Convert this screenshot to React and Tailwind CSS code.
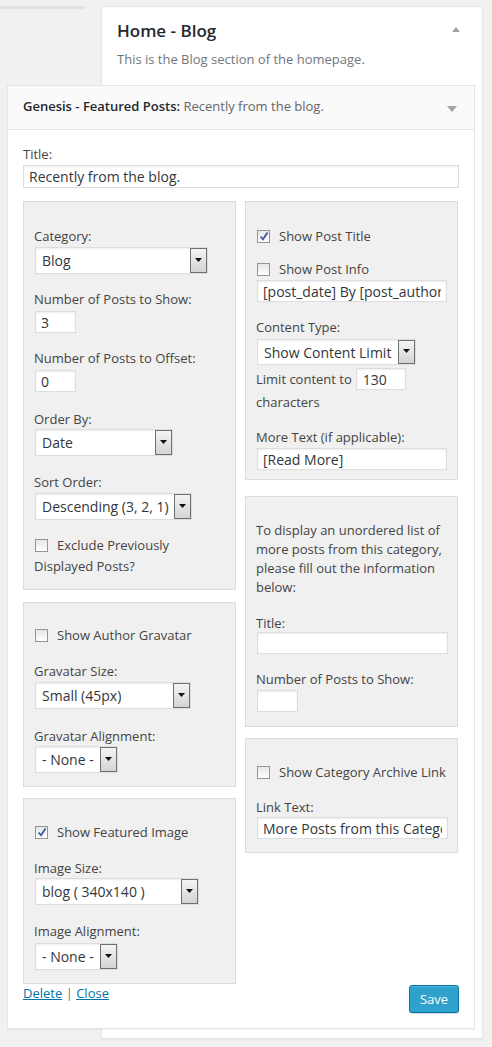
import React from 'react';

function Caret() {
  return (
    <svg width="7" height="4" viewBox="0 0 7 4">
      <path d="M0 0h7L3.5 4z" fill="#111" />
    </svg>
  );
}

// fake native select: white field + little grey button with a caret
function Select({ value, className = '' }) {
  return (
    <div className={`flex border border-[#ddd] bg-white text-[14px] text-[#32373c] shadow-[inset_0_1px_2px_rgba(0,0,0,0.07)] ${className}`}>
      <span className="flex flex-1 items-center overflow-hidden whitespace-nowrap pl-[6px]">{value}</span>
      <span className="flex w-[17px] items-center justify-center border border-[#707070] bg-linear-to-b from-[#f4f4f4] to-[#d4d4d4] pb-[2px]">
        <Caret />
      </span>
    </div>
  );
}

function Field({ value = '', className = '' }) {
  return (
    <input
      readOnly
      value={value}
      className={`block h-[22px] border border-[#ddd] bg-white px-[5px] text-[14px] text-[#32373c] shadow-[inset_0_1px_2px_rgba(0,0,0,0.07)] outline-none ${className}`}
    />
  );
}

function Check({ on }) {
  return (
    <span className="relative ml-px mr-[9px] inline-block h-[13px] w-[13px] border border-[#959595] bg-linear-to-b from-[#e6e6e6] to-white align-[-2px]">
      {on && (
        <svg className="absolute left-px top-0" width="10" height="10" viewBox="0 0 10 10">
          <path d="M1.5 5.5l2.5 2.8L8.5 1.5" fill="none" stroke="#3b58a8" strokeWidth="1.8" />
        </svg>
      )}
    </span>
  );
}

function CheckRow({ on, children, className = '' }) {
  return (
    <div className={`leading-[21px] ${className}`}>
      <Check on={on} />
      {children}
    </div>
  );
}

function Label({ children, className = '' }) {
  return <div className={`leading-[18px] ${className}`}>{children}</div>;
}

function Box({ children, className = '' }) {
  return <div className={`border border-[#dcdcdc] bg-[#f0f0f0] px-[10px] ${className}`}>{children}</div>;
}

export default function App() {
  return (
    <div className="flex min-h-screen bg-[#f1f1f1] pt-[6px] font-['Open_Sans',sans-serif] text-[13px] text-[#444]">
      <div className="h-[3px] w-[85px] shrink-0 bg-[#e2e2e2]" />

      {/* sidebar: Home - Blog */}
      <div className="ml-[16px] w-[382px] self-start border border-[#e5e5e5] bg-white pb-[9px] shadow-[0_1px_1px_rgba(0,0,0,0.04)]">
        <div className="flex items-start justify-between pl-[15px] pr-[22px] pt-[12px]">
          <h2 className="text-[17px] font-semibold leading-[24px] text-[#23282d]">Home - Blog</h2>
          <svg className="mt-[8px]" width="8" height="5" viewBox="0 0 8 5">
            <path d="M0 5h8L4 0z" fill="#a0a5aa" />
          </svg>
        </div>
        <p className="mt-[7px] pl-[15px] leading-[18px] text-[#72777c]">This is the Blog section of the homepage.</p>

        {/* expanded widget */}
        <div className="-ml-[95px] mt-[17px] w-[468px] border border-[#e5e5e5] bg-white shadow-[0_1px_1px_rgba(0,0,0,0.04)]">
          <div className="flex items-start justify-between border-b border-[#e5e5e5] bg-[#fafafa] pb-[14px] pl-[15px] pr-[17px] pt-[11px]">
            <div className="leading-[18px]">
              <span className="font-semibold text-[#23282d]">Genesis - Featured Posts:</span>
              <span className="text-[#666]"> Recently from the blog.</span>
            </div>
            <svg className="mt-[9px]" width="10" height="6" viewBox="0 0 10 6">
              <path d="M0 0h10L5 6z" fill="#a0a5aa" />
            </svg>
          </div>

          <div className="px-[15px] pb-[15px]">
            <Label className="mt-[15px]">Title:</Label>
            <Field value="Recently from the blog." className="mt-[2px] h-[23px] w-full" />

            <div className="mt-[13px] grid grid-cols-[213px_213px] items-start gap-x-[9px]">
              {/* left column */}
              <div className="flex flex-col">
                <Box className="pb-[12px] pt-[25px]">
                  <Label>Category:</Label>
                  <Select value="Blog" className="ml-px mt-[2px] h-[27px] w-[173px]" />
                  <Label className="mt-[16px]">Number of Posts to Show:</Label>
                  <Field value="3" className="ml-px mt-[3px] w-[41px]" />
                  <Label className="mt-[16px]">Number of Posts to Offset:</Label>
                  <Field value="0" className="ml-px mt-[3px] w-[41px]" />
                  <Label className="mt-[18px]">Order By:</Label>
                  <Select value="Date" className="ml-px mt-px h-[27px] w-[138px]" />
                  <Label className="mt-[17px]">Sort Order:</Label>
                  <Select value="Descending (3, 2, 1)" className="ml-px mt-[2px] h-[27px] w-[157px]" />
                  <CheckRow className="mt-[15px]">Exclude Previously Displayed Posts?</CheckRow>
                </Box>

                <Box className="mt-[12px] pb-[13px] pt-[22px]">
                  <CheckRow>Show Author Gravatar</CheckRow>
                  <Label className="mt-[16px]">Gravatar Size:</Label>
                  <Select value="Small (45px)" className="ml-px mt-[2px] h-[27px] w-[156px]" />
                  <Label className="mt-[18px]">Gravatar Alignment:</Label>
                  <Select value="- None -" className="ml-px mt-px h-[27px] w-[83px]" />
                </Box>

                <Box className="mt-[11px] pb-[13px] pt-[23px]">
                  <CheckRow on>Show Featured Image</CheckRow>
                  <Label className="mt-[16px]">Image Size:</Label>
                  <Select value="blog ( 340x140 )" className="ml-px mt-px h-[27px] w-[164px]" />
                  <Label className="mt-[17px]">Image Alignment:</Label>
                  <Select value="- None -" className="ml-px mt-[3px] h-[27px] w-[83px]" />
                </Box>
              </div>

              {/* right column */}
              <div className="flex flex-col">
                <Box className="pb-[9px] pt-[24px]">
                  <CheckRow on>Show Post Title</CheckRow>
                  <CheckRow className="mt-[12px]">Show Post Info</CheckRow>
                  <Field value="[post_date] By [post_author] [post_comments] [post_edit]" className="ml-px w-[190px]" />
                  <Label className="mt-[16px]">Content Type:</Label>
                  <Select value="Show Content Limit" className="ml-px mt-[3px] h-[26px] w-[159px]" />
                  <div className="mt-[3px] flex items-center">
                    <span className="leading-[18px]">Limit content to</span>
                    <Field value="130" className="ml-[4px] w-[50px] px-[6px]" />
                  </div>
                  <Label className="mt-[3px]">characters</Label>
                  <Label className="mt-[17px]">More Text (if applicable):</Label>
                  <Field value="[Read More]" className="ml-px mt-[2px] w-[190px]" />
                </Box>

                <Box className="mt-[16px] pb-[14px] pt-[24px]">
                  <p className="whitespace-nowrap leading-[19px]">
                    To display an unordered list of
                    <br />
                    more posts from this category,
                    <br />
                    please fill out the information
                    <br />
                    below:
                  </p>
                  <Label className="mt-[17px]">Title:</Label>
                  <Field className="ml-px w-[191px]" />
                  <Label className="mt-[16px]">Number of Posts to Show:</Label>
                  <Field className="ml-px mt-[2px] w-[41px]" />
                </Box>

                <Box className="mt-[11px] pb-[13px] pt-[23px]">
                  <CheckRow className="overflow-hidden whitespace-nowrap">Show Category Archive Link</CheckRow>
                  <Label className="mt-[15px]">Link Text:</Label>
                  <Field value="More Posts from this Category" className="ml-px mt-px w-[191px]" />
                </Box>
              </div>
            </div>

            <div className="flex items-start justify-between">
              <div className="leading-[18px] text-[#0073aa]">
                <a href="#" className="underline">Delete</a>
                <span className="text-[#72777c]"> | </span>
                <a href="#" className="underline">Close</a>
              </div>
              <button className="mt-px h-[28px] w-[50px] rounded-[3px] border border-[#0074a2] bg-[#2ea2cc] text-[13px] leading-[26px] text-white shadow-[inset_0_1px_0_rgba(120,200,230,0.5),0_1px_0_rgba(0,0,0,0.15)]">
                Save
              </button>
            </div>
          </div>
        </div>
      </div>
    </div>
  );
}
